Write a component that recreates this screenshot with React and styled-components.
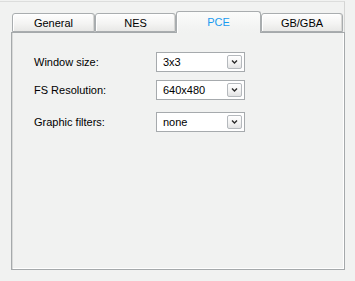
import React from "react";
import styled, { createGlobalStyle } from "styled-components";

const Global = createGlobalStyle`
  html, body { margin: 0; padding: 0; background: #f1f2f1; }
  body { font-family: "Liberation Sans", Arial, sans-serif; font-size: 11px; color: #000; }
`;

const Page = styled.div`
  width: 355px;
  height: 281px;
  background: #f1f2f1;
  overflow: hidden;
`;

const Frame = styled.div`
  width: 344px;
  height: 268px;
  margin-top: 1px;
  border-top: 1px solid #dcdddc;
  border-right: 1px solid #d4d5d4;
  display: flex;
  flex-direction: column;
`;

const TabStrip = styled.div`
  display: flex;
  align-items: flex-end;
  height: 30px;
  padding-left: 12px;
  position: relative;
  z-index: 1;
`;

const Tab = styled.div`
  box-sizing: border-box;
  width: ${(p) => p.$w}px;
  margin-left: ${(p) => p.$ml || 0}px;
  height: ${(p) => (p.$active ? 22 : 19)}px;
  margin-bottom: ${(p) => (p.$active ? -1 : 0)}px;
  display: flex;
  align-items: center;
  justify-content: center;
  padding-top: ${(p) => (p.$active ? 0 : 1)}px;
  border: 1px solid #a9adaf;
  border-bottom: ${(p) => (p.$active ? "none" : "1px solid #a9adaf")};
  border-radius: 3px 3px 0 0;
  background: ${(p) =>
    p.$active
      ? "linear-gradient(#fbfcfb, #f3f4f3 70%, #f1f2f1)"
      : "linear-gradient(#fefefe, #f4f4f3 55%, #e8e8e6)"};
  box-shadow: ${(p) =>
    p.$active ? "inset 1px 0 0 #fff" : "inset -1px 0 0 #d6d6d4, inset 1px 1px 0 #fff"};
  color: ${(p) => (p.$active ? "#1a9bf0" : "#000")};
  font-size: 11px;
  line-height: 13px;
`;

const Panel = styled.div`
  box-sizing: border-box;
  margin-left: 11px;
  margin-right: -1px;
  flex: 1;
  border: 1px solid #a5a9ab;
  box-shadow: inset 1px 0 0 #d9dad9, inset 0 -1px 0 #fff, inset -1px 0 0 #fff;
  background: #f1f2f1;
  padding: 19px 0 0 22px;
`;

const Row = styled.div`
  display: grid;
  grid-template-columns: 122px 89px;
  align-items: center;
  margin-top: ${(p) => p.$mt || 0}px;
`;

const Label = styled.span`
  font-size: 11px;
  line-height: 13px;
  padding-top: 1px;
`;

const Select = styled.div`
  box-sizing: border-box;
  height: 20px;
  border: 1px solid #a6aaad;
  background: #fff;
  display: flex;
  align-items: center;
  justify-content: space-between;
  padding: 0 2px 0 6px;
`;

const Value = styled.span`
  font-size: 11px;
  line-height: 13px;
  padding-top: 1px;
`;

const DropButton = styled.div`
  box-sizing: border-box;
  width: 15px;
  height: 14px;
  border: 1px solid #b5b9bd;
  border-radius: 2px;
  background: linear-gradient(#ffffff, #f2f2f2 60%, #e1e2e3);
  display: flex;
  align-items: center;
  justify-content: center;
`;

const Chevron = () => (
  <svg width="7" height="4" viewBox="0 0 7 4">
    <path d="M1 0.5 L3.5 3 L6 0.5" fill="none" stroke="#2b2b2b" strokeWidth="1.4" />
  </svg>
);

const Combo = ({ value }) => (
  <Select>
    <Value>{value}</Value>
    <DropButton>
      <Chevron />
    </DropButton>
  </Select>
);

const tabs = [
  { label: "General", w: 83 },
  { label: "NES", w: 81, ml: 0 },
  { label: "PCE", w: 85, active: true },
  { label: "GB/GBA", w: 82 },
];

const rows = [
  { label: "Window size:", value: "3x3", mt: 0 },
  { label: "FS Resolution:", value: "640x480", mt: 8 },
  { label: "Graphic filters:", value: "none", mt: 12 },
];

export default function App() {
  return (
    <Page>
      <Global />
      <Frame>
        <TabStrip>
          {tabs.map((t) => (
            <Tab key={t.label} $w={t.w} $ml={t.ml} $active={t.active}>
              {t.label}
            </Tab>
          ))}
        </TabStrip>
        <Panel>
          {rows.map((r) => (
            <Row key={r.label} $mt={r.mt}>
              <Label>{r.label}</Label>
              <Combo value={r.value} />
            </Row>
          ))}
        </Panel>
      </Frame>
    </Page>
  );
}
